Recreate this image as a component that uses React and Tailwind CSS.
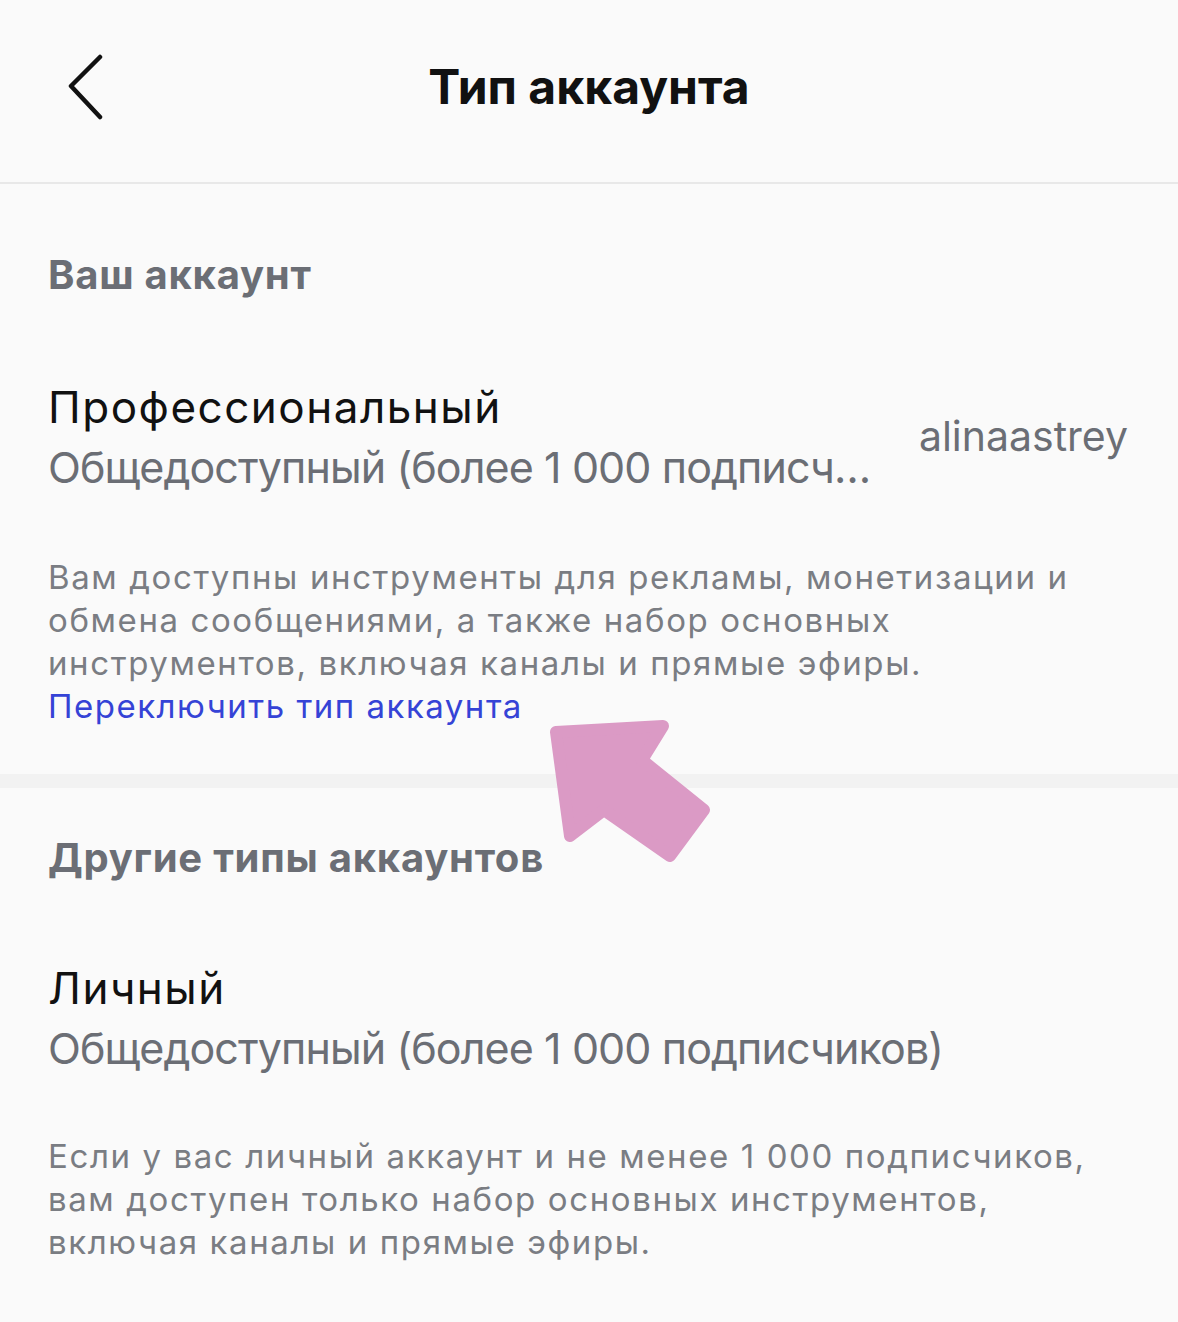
import React from 'react';

const font = { fontFamily: 'Inter, "Noto Sans", sans-serif' };

function BackChevron() {
  return (
    <svg width="40" height="66" viewBox="0 0 40 66" fill="none" className="block">
      <path d="M32 3 L3 32 L32 63" stroke="#111" strokeWidth="4.5" strokeLinecap="round" strokeLinejoin="round" />
    </svg>
  );
}

function PinkArrow() {
  // hand-drawn annotation arrow pointing at the switch link
  return (
    <svg width="170" height="150" viewBox="0 0 170 150" className="absolute left-[546px] top-[718px]">
      <path
        d="M10 14 L117 8 L96 42 L158 92 L124 138 L58 92 L24 118 Z"
        fill="#db9ac5"
        stroke="#db9ac5"
        strokeWidth="12"
        strokeLinejoin="round"
      />
    </svg>
  );
}

export default function App() {
  return (
    <div className="relative w-[1178px] h-[1322px] bg-[#fafafa] overflow-hidden" style={font}>
      {/* header */}
      <div className="relative h-[184px] border-b-2 border-[#e8e8e8] flex items-center justify-center">
        <div className="absolute left-[68px] top-[54px]">
          <BackChevron />
        </div>
        <h1 className="text-[48px] font-bold text-[#111] -mt-[8px]">Тип аккаунта</h1>
      </div>

      {/* current account */}
      <div className="px-[48px] pt-[66px] pb-[46px]">
        <h2 className="text-[40px] leading-[50px] font-bold text-[#6b6e75] tracking-[0.75px]">Ваш аккаунт</h2>

        <div className="flex items-center justify-between mt-[77px]">
          <div>
            <div className="text-[44px] leading-[60px] text-[#111] tracking-[1.5px]">Профессиональный</div>
            <div className="text-[43px] leading-[60px] text-[#6b6e75] tracking-[-0.9px]">Общедоступный (более 1 000 подписч…</div>
          </div>
          <div className="text-[41px] text-[#6b6e75] pr-[2px]">alinaastrey</div>
        </div>

        <p className="mt-[59px] text-[33px] leading-[43px] text-[#7a7d83] tracking-[1.6px]">
          Вам доступны инструменты для рекламы, монетизации и<br />
          обмена сообщениями, а также набор основных<br />
          инструментов, включая каналы и прямые эфиры.
        </p>
        <a className="block text-[33px] leading-[43px] text-[#3543d6] tracking-[1.5px]">Переключить тип аккаунта</a>
      </div>

      <div className="h-[14px] bg-[#f2f2f2]" />

      {/* other account types */}
      <div className="px-[48px] pt-[45px]">
        <h2 className="text-[40px] leading-[50px] font-bold text-[#6b6e75] tracking-[0.75px]">Другие типы аккаунтов</h2>

        <div className="mt-[75px]">
          <div className="text-[44px] leading-[60px] text-[#111] tracking-[1.5px]">Личный</div>
          <div className="text-[43px] leading-[60px] text-[#6b6e75] tracking-[-0.9px]">Общедоступный (более 1 000 подписчиков)</div>
        </div>

        <p className="mt-[57px] text-[33px] leading-[43px] text-[#7a7d83] tracking-[1.6px]">
          Если у вас личный аккаунт и не менее 1 000 подписчиков,<br />
          вам доступен только набор основных инструментов,<br />
          включая каналы и прямые эфиры.
        </p>
      </div>

      <PinkArrow />
    </div>
  );
}
